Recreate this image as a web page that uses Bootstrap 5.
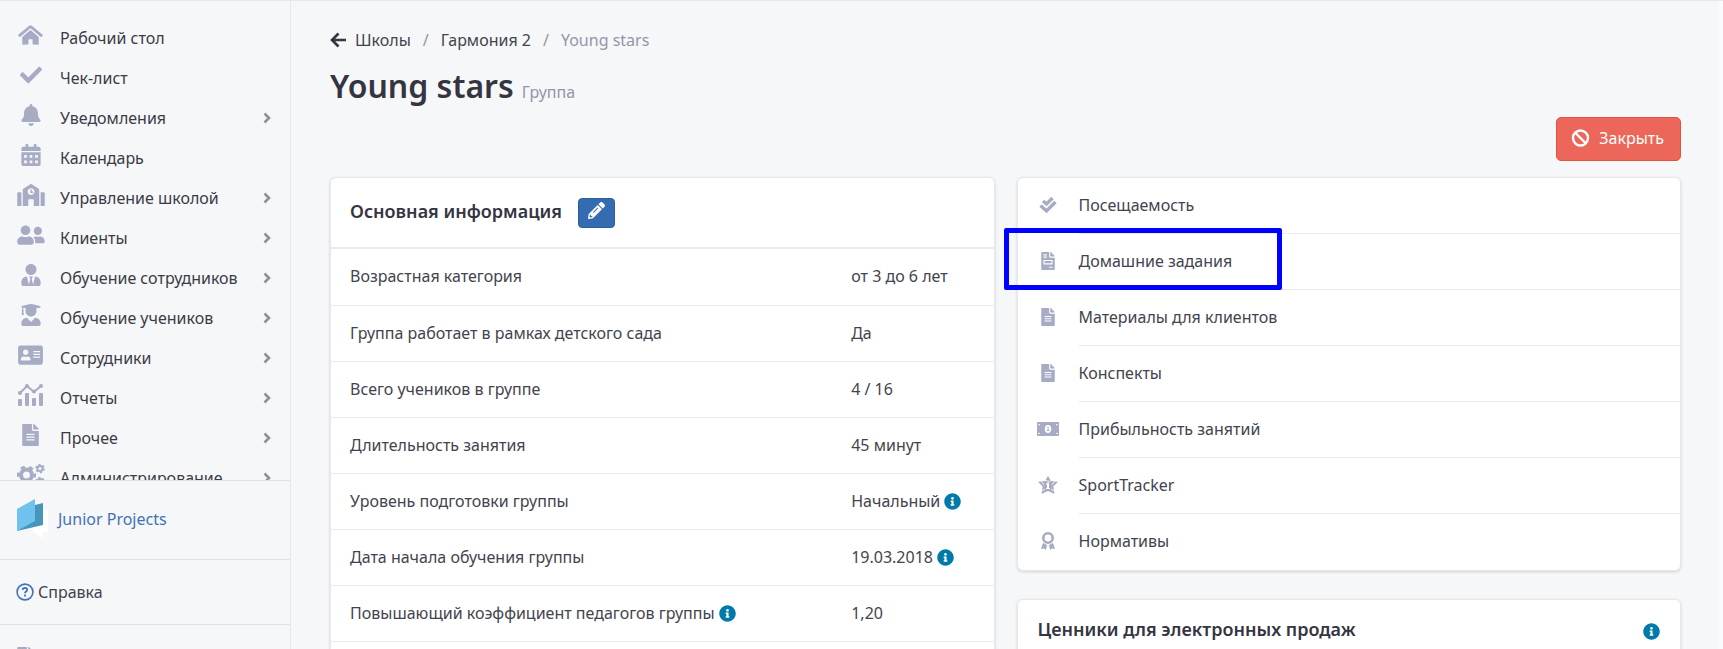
<!DOCTYPE html>
<html lang="ru">
<head>
<meta charset="utf-8">
<meta name="viewport" content="width=device-width, initial-scale=1">
<title>Young stars</title>
<link href="https://cdn.jsdelivr.net/npm/bootstrap@5.3.0/dist/css/bootstrap.min.css" rel="stylesheet">
<style>
body{font-family:"Noto Sans","Open Sans",sans-serif;font-size:16px;line-height:24px;color:#43434f;background:#f5f7f9}
a{color:inherit;text-decoration:none}
svg{fill:currentColor;display:block}
.line-ico{fill:none;stroke:currentColor}
.app{height:100vh;overflow:hidden;border-top:1px solid #e6e8eb}
.side{width:291px;border-right:1px solid #e6e8ec}
.side-list{padding-top:17px;min-height:0}
.side-link{height:40px;padding:0 19px 0 14px;color:#3b3b47}
.side-ico{width:33px;margin-right:13px;padding-bottom:6px;color:#a7abc3}
.side-ico svg,.act-ico svg{margin:0 auto}
.chev{color:#919191}
.side-sec{border-top:1px solid #dfe2e6}
.brand-sec{height:79px;padding:0 0 3px 17px;color:#4470b5}
.help-sec{height:65px;padding:0 0 0 16px}
.more-sec{height:25px;padding:22px 0 0 17px;color:#a7abc3;overflow:hidden}
.help-ico{color:#4470b5}
.page{padding:27px 38px 0 39px;border-right:4px solid #fafbfc}
.crumbs{color:#43434f}
.crumbs .sep,.crumbs .cur,.kind{color:#9496a8}
.crumbs .sep{margin:0 12px}
.title-row{margin-top:12px}
.title{font-size:32px;line-height:44px;font-weight:600;color:#353542}
.close-row{margin-top:9px}
.btn-stop{--bs-btn-color:#fff;--bs-btn-bg:#ec6759;--bs-btn-border-color:#e4523f;--bs-btn-hover-color:#fff;--bs-btn-hover-bg:#e4523f;height:44px;border-radius:5px;padding:0 16px 2px 14px}
.cols{margin-top:16px;gap:22px}
.panel{background:#fff;border:1px solid #e6e8ec;border-radius:6px;box-shadow:0 1px 3px rgba(60,60,90,.2)}
.panel-title{font-size:18px;line-height:28px;font-weight:600;color:#353542}
.info-head{height:71px;padding:0 20px 4px 19px;gap:16px;border-bottom:2px solid #e9ebee}
.btn-pen{--bs-btn-color:#fff;--bs-btn-bg:#356cb1;--bs-btn-border-color:#2c5e9e;--bs-btn-hover-color:#fff;--bs-btn-hover-bg:#2c5e9e;width:37px;height:30px;padding:0 0 4px;border-radius:4px;margin-top:4px}
.facts{table-layout:fixed}
.facts td,.facts th{height:56px;padding:0 0 1px 20px;border-bottom:1px solid #e9ebee;font-weight:400;vertical-align:middle}
.facts th{width:75.5%;padding-left:19px}
.inf{color:#007aa8;display:inline-block;vertical-align:-3px}
.act{height:56px}
.act-ico{width:61px;color:#a7abc3;padding-bottom:3px}
.act-txt{border-bottom:1px solid #e9ebee;padding-bottom:2px}
.act:last-child .act-txt{border-bottom:0}
.frame{position:absolute;left:-14px;top:-6px;width:278px;height:62px;border:5px solid #00f;border-radius:2px;pointer-events:none}
.price{margin-top:28px;height:90px;padding:15px 20px}
</style>
</head>
<body>
<svg width="0" height="0" class="position-absolute" aria-hidden="true">
<symbol id="home" viewBox="0 0 576 512"><path d="M280.37 148.26L96 300.11V464a16 16 0 0 0 16 16l112.06-.29a16 16 0 0 0 15.92-16V368a16 16 0 0 1 16-16h64a16 16 0 0 1 16 16v95.64a16 16 0 0 0 16 16.05L464 480a16 16 0 0 0 16-16V300L295.67 148.26a12.19 12.19 0 0 0-15.3 0zM571.6 251.47L318.47 43a48 48 0 0 0-61 0L4.34 251.47a12 12 0 0 0-1.6 16.9l25.5 31A12 12 0 0 0 45.15 301l235.22-193.74a12.19 12.19 0 0 1 15.3 0L530.9 301a12 12 0 0 0 16.9-1.6l25.5-31a12 12 0 0 0-1.7-16.93z"/></symbol>
<symbol id="check" viewBox="0 0 512 512"><path d="M173.9 439.4L7.5 273c-10-10-10-26.200 0-36.200l36.200-36.200c10-10 26.200-10 36.200 0L192 312.700 432.100 72.600c10-10 26.200-10 36.200 0l36.200 36.200c10 10 10 26.200 0 36.200L210.100 439.400c-10 10-26.200 10-36.200 0z"/></symbol>
<symbol id="bell" viewBox="0 0 448 512"><path d="M224 512c35.32 0 63.97-28.65 63.97-64H160.03c0 35.35 28.65 64 63.97 64zm215.39-149.71c-19.32-20.76-55.47-51.99-55.47-154.29 0-77.7-54.48-139.9-127.94-155.16V32c0-17.67-14.32-32-31.98-32s-31.98 14.33-31.98 32v20.84C118.56 68.1 64.08 130.3 64.08 208c0 102.3-36.15 133.53-55.47 154.29-6 6.45-8.66 14.16-8.61 21.71.11 16.4 12.98 32 32.1 32h383.8c19.12 0 32-15.6 32.1-32 .05-7.55-2.61-15.27-8.61-21.71z"/></symbol>
<symbol id="cal" viewBox="0 0 448 512"><path fill-rule="evenodd" d="M0 464c0 26.500 21.500 48 48 48h352c26.500 0 48-21.500 48-48V192H0zM64 256h64v64H64zM192 256h64v64h-64zM320 256h64v64h-64zM64 384h64v64H64zM192 384h64v64h-64zM320 384h64v64h-64zM400 64h-48V16c0-8.800-7.200-16-16-16h-32c-8.800 0-16 7.200-16 16v48H160V16c0-8.800-7.200-16-16-16h-32c-8.800 0-16 7.200-16 16v48H48C21.500 64 0 85.500 0 112v48h448v-48c0-26.500-21.500-48-48-48z"/></symbol>
<symbol id="school" viewBox="0 0 640 512"><path d="M0 224v272c0 8.840 7.160 16 16 16h80V192H32c-17.670 0-32 14.330-32 32zm360-48h-24v-40c0-4.420-3.580-8-8-8h-16c-4.420 0-8 3.580-8 8v64c0 4.420 3.580 8 8 8h48c4.420 0 8-3.580 8-8v-16c0-4.420-3.580-8-8-8zm137.750-63.960l-160-106.670a32.020 32.020 0 0 0-35.500 0l-160 106.670A32 32 0 0 0 128 138.660V512h128V368c0-8.840 7.160-16 16-16h96c8.840 0 16 7.160 16 16v144h128V138.670c0-10.700-5.350-20.690-14.250-26.630zM320 256c-44.180 0-80-35.820-80-80s35.820-80 80-80 80 35.820 80 80-35.820 80-80 80zm288-64h-64v320h80c8.840 0 16-7.160 16-16V224c0-17.670-14.330-32-32-32z"/></symbol>
<symbol id="friends" viewBox="0 0 640 512"><path d="M192 256c61.9 0 112-50.1 112-112S253.9 32 192 32 80 82.1 80 144s50.1 112 112 112zm76.800 32h-8.300c-20.800 10-43.900 16-68.500 16s-47.600-6-68.500-16h-8.300C51.600 288 0 339.600 0 403.200V432c0 26.500 21.500 48 48 48h288c26.500 0 48-21.500 48-48v-28.800c0-63.600-51.600-115.200-115.200-115.200zM480 256c53 0 96-43 96-96s-43-96-96-96-96 43-96 96 43 96 96 96zm48 32h-3.800c-13.900 4.800-28.600 8-44.200 8s-30.300-3.200-44.200-8H432c-20.400 0-39.200 5.900-55.700 15.400 24.400 26.300 39.700 61.200 39.700 99.800v38.400c0 2.200-.5 4.300-.6 6.400H592c26.500 0 48-21.500 48-48 0-61.900-50.100-112-112-112z"/></symbol>
<symbol id="tie" viewBox="0 0 448 512"><path d="M224 256c70.700 0 128-57.300 128-128S294.700 0 224 0 96 57.300 96 128s57.300 128 128 128zm95.800 32.600L272 480l-32-136 32-56h-96l32 56-32 136-47.800-191.400C56.900 292 0 350.300 0 422.400V464c0 26.500 21.500 48 48 48h352c26.500 0 48-21.500 48-48v-41.600c0-72.100-56.900-130.400-128.200-133.800z"/></symbol>
<symbol id="grad" viewBox="0 0 448 512"><path d="M319.4 320.6L224 416l-95.400-95.400C57.100 323.700 0 382.200 0 454.400v9.600c0 26.500 21.500 48 48 48h352c26.500 0 48-21.500 48-48v-9.600c0-72.200-57.100-130.700-128.600-133.800zM13.600 79.800l6.400 1.500v58.400c-7 4.200-12 11.500-12 20.300 0 8.400 4.600 15.400 11.100 19.700L3.500 242c-1.700 6.900 2.100 14 7.600 14h41.800c5.500 0 9.300-7.100 7.600-14l-15.600-62.300C51.400 175.400 56 168.400 56 160c0-8.800-5-16.100-12-20.300V87.100l66 15.900c-8.600 17.200-14 36.400-14 57 0 70.700 57.300 128 128 128s128-57.300 128-128c0-20.600-5.300-39.800-14-57l96.300-23.200c18.200-4.400 18.200-27.100 0-31.500l-190.400-46c-13-3.100-26.700-3.100-39.700 0L13.600 48.200c-18.100 4.400-18.100 27.200 0 31.600z"/></symbol>
<symbol id="idcard" viewBox="0 0 576 512"><path fill-rule="evenodd" d="M528 32H48C21.500 32 0 53.500 0 80v352c0 26.500 21.500 48 48 48h480c26.500 0 48-21.500 48-48V80c0-26.500-21.500-48-48-48zm-352 96c35.300 0 64 28.700 64 64s-28.700 64-64 64-64-28.700-64-64 28.700-64 64-64zm112 236.800c0 10.600-10 19.200-22.400 19.200H86.400C74 384 64 375.400 64 364.800v-19.200c0-31.800 30.100-57.600 67.200-57.600h5c12.300 5.100 25.700 8 39.800 8s27.600-2.900 39.800-8h5c37.100 0 67.200 25.800 67.200 57.600zM352 288h160v32H352zM352 224h160v32H352zM352 160h160v32H352z"/></symbol>
<symbol id="chart" viewBox="0 0 25 22"><path d="M2 9l7-7 7 6 7-6" fill="none" stroke="currentColor" stroke-width="2"/><circle cx="2" cy="9" r="2"/><circle cx="9" cy="2" r="2"/><circle cx="16" cy="7.500" r="2"/><circle cx="23" cy="2" r="2"/><rect y="15" width="4" height="7" rx="1"/><rect x="7" y="9" width="4" height="13" rx="1"/><rect x="14" y="14" width="4" height="8" rx="1"/><rect x="21" y="9" width="4" height="13" rx="1"/></symbol>
<symbol id="file" viewBox="0 0 384 512"><path fill-rule="evenodd" d="M224 136V0H24C10.700 0 0 10.700 0 24v464c0 13.300 10.700 24 24 24h336c13.300 0 24-10.700 24-24V160H248c-13.200 0-24-10.800-24-24zM96 224h192v32H96zM96 288h192v32H96zM96 352h192v32H96zM384 121.900v6.100H256V0h6.100c6.400 0 12.500 2.500 17 7l97.900 98c4.500 4.500 7 10.600 7 16.900z"/></symbol>
<symbol id="invoice" viewBox="0 0 384 512"><path fill-rule="evenodd" d="M224 136V0H24C10.700 0 0 10.700 0 24v464c0 13.300 10.700 24 24 24h336c13.300 0 24-10.700 24-24V160H248c-13.200 0-24-10.800-24-24zM64 64h96v32H64zM64 128h96v32H64zM64 224h256v128H64zM96 256h192v64H96zM224 416h96v32h-96zM384 121.900v6.100H256V0h6.100c6.400 0 12.500 2.500 17 7l97.900 98c4.500 4.500 7 10.600 7 16.900z"/></symbol>
<symbol id="cogs" viewBox="0 0 28 22"><g fill="none" stroke="currentColor"><circle cx="9.500" cy="11" r="5.500" stroke-width="4"/><circle cx="9.500" cy="11" r="8.300" stroke-width="2.500" stroke-dasharray="4.350 4.350" stroke-dashoffset="2"/><circle cx="23" cy="4.500" r="2.600" stroke-width="2"/><circle cx="23" cy="4.500" r="4" stroke-width="1.500" stroke-dasharray="2.100 2.100"/><circle cx="23" cy="17.500" r="2.600" stroke-width="2"/><circle cx="23" cy="17.500" r="4" stroke-width="1.500" stroke-dasharray="2.100 2.100"/></g></symbol>
<symbol id="chev" viewBox="0 0 8 12"><path d="M1.500 1.500L6 6l-4.500 4.500" fill="none" stroke="currentColor" stroke-width="2.600"/></symbol>
<symbol id="info" viewBox="0 0 512 512"><path d="M256 8C119 8 8 119 8 256s111 248 248 248 248-111 248-248S393 8 256 8zm0 110c23.200 0 42 18.800 42 42s-18.800 42-42 42-42-18.800-42-42 18.800-42 42-42zm56 254c0 6.600-5.400 12-12 12h-88c-6.600 0-12-5.400-12-12v-24c0-6.600 5.400-12 12-12h12v-64h-12c-6.600 0-12-5.400-12-12v-24c0-6.600 5.400-12 12-12h64c6.600 0 12 5.400 12 12v100h12c6.600 0 12 5.400 12 12z"/></symbol>
<symbol id="pen" viewBox="0 0 512 512"><path fill-rule="evenodd" d="M497.900 142.100l-46.100 46.100c-4.700 4.700-12.300 4.700-17 0l-111-111c-4.700-4.700-4.700-12.300 0-17l46.100-46.100c18.700-18.700 49.100-18.700 67.900 0l60.100 60.100c18.800 18.700 18.800 49.100 0 67.900zM284.200 99.800L21.600 362.400.4 483.900c-2.900 16.400 11.400 30.600 27.800 27.800l121.500-21.300 262.600-262.600c4.700-4.700 4.700-12.300 0-17l-111-111c-4.800-4.700-12.400-4.700-17.100 0zM88 424v-48l-28 14-12 60 14 14 60-12 14-28zM290 168l20 20-140 140-20-20z"/></symbol>
<symbol id="checks" viewBox="0 0 18 18"><path d="M4 5l3.500 3L13.500 2M1.500 9.500l6 5.500L16.500 6" fill="none" stroke="currentColor" stroke-width="3.400"/></symbol>
<symbol id="money" viewBox="0 0 22 14"><path fill-rule="evenodd" d="M1 0h20q1 0 1 1v12q0 1-1 1H1q-1 0-1-1V1q0-1 1-1zM11 3a3.200 4 0 0 0 0 8a3.200 4 0 0 0 0-8zM1.500 2v1.500q1.500 0 1.500-1.500zM19 2q0 1.500 1.500 1.500V2zM1.500 10.500V12H3q0-1.500-1.500-1.500zM20.500 10.500q-1.500 0-1.500 1.500h1.500z"/><path d="M10 5.500l1-.7h.6V8h.9v1H9.700V8h.9V6z"/></symbol>
<symbol id="star" viewBox="0 0 20 18"><path fill-rule="evenodd" d="M10 0L13 5 20 5.800 15.300 10.500 16.500 18 10 15 3.500 18 4.700 10.500 0 5.800 7 5zM10 6.500l-2 1v1l1-.2V12H8v1h4v-1h-1V6.500z"/><path d="M6 9L3.500 5.500M14 9l2.500-3.500M7 13.500l-3 1M13 13.500l3 1M7 4.500l5.500 1" stroke="#fff" stroke-width=".8"/></symbol>
<symbol id="award" viewBox="0 0 14 18"><circle cx="7" cy="6" r="4.700" fill="none" stroke="currentColor" stroke-width="2.600"/><path d="M2 11l4 2-1 5-2-1.500L0 17zM12 11l-4 2 1 5 2-1.500L14 17z"/></symbol>
</svg>
<div class="app d-flex">
<aside class="side d-flex flex-column flex-shrink-0">
<nav class="side-list flex-grow-1 overflow-hidden">
<a href="#" class="side-link d-flex align-items-center"><span class="side-ico"><svg width="25" height="22"><use href="#home"/></svg></span>Рабочий стол</a>
<a href="#" class="side-link d-flex align-items-center"><span class="side-ico"><svg width="22" height="22"><use href="#check"/></svg></span>Чек-лист</a>
<a href="#" class="side-link d-flex align-items-center"><span class="side-ico"><svg width="20" height="22"><use href="#bell"/></svg></span>Уведомления<svg class="chev ms-auto" width="8" height="12"><use href="#chev"/></svg></a>
<a href="#" class="side-link d-flex align-items-center"><span class="side-ico"><svg width="20" height="22"><use href="#cal"/></svg></span>Календарь</a>
<a href="#" class="side-link d-flex align-items-center"><span class="side-ico"><svg width="28" height="22"><use href="#school"/></svg></span>Управление школой<svg class="chev ms-auto" width="8" height="12"><use href="#chev"/></svg></a>
<a href="#" class="side-link d-flex align-items-center"><span class="side-ico"><svg width="28" height="22"><use href="#friends"/></svg></span>Клиенты<svg class="chev ms-auto" width="8" height="12"><use href="#chev"/></svg></a>
<a href="#" class="side-link d-flex align-items-center"><span class="side-ico"><svg width="20" height="22"><use href="#tie"/></svg></span>Обучение сотрудников<svg class="chev ms-auto" width="8" height="12"><use href="#chev"/></svg></a>
<a href="#" class="side-link d-flex align-items-center"><span class="side-ico"><svg width="20" height="22"><use href="#grad"/></svg></span>Обучение учеников<svg class="chev ms-auto" width="8" height="12"><use href="#chev"/></svg></a>
<a href="#" class="side-link d-flex align-items-center"><span class="side-ico"><svg width="25" height="22"><use href="#idcard"/></svg></span>Сотрудники<svg class="chev ms-auto" width="8" height="12"><use href="#chev"/></svg></a>
<a href="#" class="side-link d-flex align-items-center"><span class="side-ico"><svg width="25" height="22"><use href="#chart"/></svg></span>Отчеты<svg class="chev ms-auto" width="8" height="12"><use href="#chev"/></svg></a>
<a href="#" class="side-link d-flex align-items-center"><span class="side-ico"><svg width="17" height="22"><use href="#file"/></svg></span>Прочее<svg class="chev ms-auto" width="8" height="12"><use href="#chev"/></svg></a>
<a href="#" class="side-link d-flex align-items-center"><span class="side-ico"><svg width="28" height="22"><use href="#cogs"/></svg></span>Администрирование<svg class="chev ms-auto" width="8" height="12"><use href="#chev"/></svg></a>
</nav>
<a href="#" class="side-sec brand-sec d-flex align-items-center flex-shrink-0"><svg class="me-2" width="33" height="39" viewBox="0 0 33 39"><path d="M17 11h14v22h-5v6l-10-6z" fill="#fff"/><path d="M14 7l12-3v22L0 32z" fill="#4796ba"/><path d="M0 10L18 0v22L0 32z" fill="#6fc1ee"/></svg>Junior Projects</a>
<a href="#" class="side-sec help-sec d-flex align-items-center flex-shrink-0"><svg class="help-ico line-ico me-1" width="18" height="18" viewBox="0 0 18 18"><circle cx="9" cy="9" r="7.900" stroke-width="1.600"/><path d="M6.700 6.800q.2-1.900 2.300-1.900 2.200.1 2.200 1.900 0 1.200-1.200 1.800-1 .5-1 1.600M9 11.500v2" stroke-width="1.800"/></svg>Справка</a>
<div class="side-sec more-sec flex-shrink-0"><svg width="17" height="22"><use href="#file"/></svg></div>
</aside>
<main class="page flex-grow-1">
<nav class="crumbs d-flex align-items-center"><a href="#" class="d-flex align-items-center"><svg class="me-2" width="17" height="16" viewBox="0 0 17 16"><path d="M8.500 1.500L2 8l6.500 6.500M2 8h14" fill="none" stroke="#353542" stroke-width="2.600"/></svg>Школы</a><span class="sep">/</span><a href="#">Гармония 2</a><span class="sep">/</span><span class="cur">Young stars</span></nav>
<div class="title-row d-flex align-items-baseline gap-2"><h1 class="title m-0">Young stars</h1><span class="kind">Группа</span></div>
<div class="close-row d-flex justify-content-end"><button type="button" class="btn btn-stop d-flex align-items-center"><svg class="line-ico me-2" width="20" height="18" viewBox="0 0 20 18" stroke-width="2.400"><circle cx="9.500" cy="9" r="7.500"/><path d="M4 3.500l11 11"/></svg>Закрыть</button></div>
<div class="cols row row-cols-2 flex-nowrap mx-0">
<section class="panel col px-0 flex-fill w-50">
<div class="info-head d-flex align-items-center"><h2 class="panel-title m-0">Основная информация</h2><button type="button" class="btn btn-pen d-flex align-items-center justify-content-center" aria-label="Редактировать"><svg width="17" height="17"><use href="#pen"/></svg></button></div>
<table class="facts w-100">
<tr><th scope="row">Возрастная категория</th><td>от 3 до 6 лет</td></tr>
<tr><th scope="row">Группа работает в рамках детского сада</th><td>Да</td></tr>
<tr><th scope="row">Всего учеников в группе</th><td>4 / 16</td></tr>
<tr><th scope="row">Длительность занятия</th><td>45 минут</td></tr>
<tr><th scope="row">Уровень подготовки группы</th><td class="text-nowrap">Начальный <svg class="inf" width="17" height="17"><use href="#info"/></svg></td></tr>
<tr><th scope="row">Дата начала обучения группы</th><td class="text-nowrap">19.03.2018 <svg class="inf" width="17" height="17"><use href="#info"/></svg></td></tr>
<tr><th scope="row">Повышающий коэффициент педагогов группы <svg class="inf" width="17" height="17"><use href="#info"/></svg></th><td>1,20</td></tr>
<tr><th></th><td></td></tr>
</table>
</section>
<div class="col px-0 flex-fill w-50">
<section class="panel">
<a href="#" class="act d-flex"><span class="act-ico d-flex align-items-center"><svg width="18" height="18"><use href="#checks"/></svg></span><span class="act-txt flex-grow-1 d-flex align-items-center">Посещаемость</span></a>
<a href="#" class="act d-flex position-relative"><span class="act-ico d-flex align-items-center"><svg width="14" height="18"><use href="#invoice"/></svg></span><span class="act-txt flex-grow-1 d-flex align-items-center">Домашние задания</span><span class="frame"></span></a>
<a href="#" class="act d-flex"><span class="act-ico d-flex align-items-center"><svg width="14" height="18"><use href="#file"/></svg></span><span class="act-txt flex-grow-1 d-flex align-items-center">Материалы для клиентов</span></a>
<a href="#" class="act d-flex"><span class="act-ico d-flex align-items-center"><svg width="14" height="18"><use href="#file"/></svg></span><span class="act-txt flex-grow-1 d-flex align-items-center">Конспекты</span></a>
<a href="#" class="act d-flex"><span class="act-ico d-flex align-items-center"><svg width="22" height="14"><use href="#money"/></svg></span><span class="act-txt flex-grow-1 d-flex align-items-center">Прибыльность занятий</span></a>
<a href="#" class="act d-flex"><span class="act-ico d-flex align-items-center"><svg width="20" height="18"><use href="#star"/></svg></span><span class="act-txt flex-grow-1 d-flex align-items-center">SportTracker</span></a>
<a href="#" class="act d-flex"><span class="act-ico d-flex align-items-center"><svg width="14" height="18"><use href="#award"/></svg></span><span class="act-txt flex-grow-1 d-flex align-items-center">Нормативы</span></a>
</section>
<section class="panel price d-flex justify-content-between align-items-start"><h2 class="panel-title m-0">Ценники для электронных продаж</h2><svg class="inf mt-2" width="17" height="17"><use href="#info"/></svg></section>
</div>
</div>
</main>
</div>
<script src="https://cdn.jsdelivr.net/npm/bootstrap@5.3.0/dist/js/bootstrap.bundle.min.js"></script>
</body>
</html>
